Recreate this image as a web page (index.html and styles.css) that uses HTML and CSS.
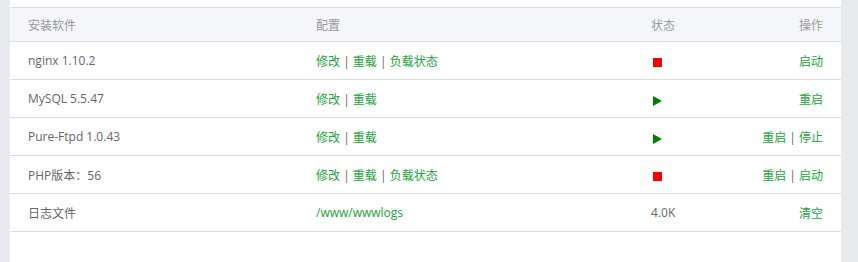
FILE: index.html
```html
<!DOCTYPE html>
<html lang="zh-CN">
<head>
<meta charset="utf-8">
<link rel="stylesheet" href="styles.css">
</head>
<body>
<div class="page">
  <div class="side"></div>
  <div class="panel">
    <table class="soft">
      <colgroup>
        <col class="c1"><col class="c2"><col class="c3"><col class="c4">
      </colgroup>
      <thead>
        <tr><th>安装软件</th><th>配置</th><th>状态</th><th class="r">操作</th></tr>
      </thead>
      <tbody>
        <tr>
          <td>nginx 1.10.2</td>
          <td><a class="lnk">修改</a> | <a class="lnk">重载</a> | <a class="lnk">负载状态</a></td>
          <td><span class="stop"></span></td>
          <td class="r"><a class="lnk">启动</a></td>
        </tr>
        <tr>
          <td>MySQL 5.5.47</td>
          <td><a class="lnk">修改</a> | <a class="lnk">重载</a></td>
          <td><span class="run"></span></td>
          <td class="r"><a class="lnk">重启</a></td>
        </tr>
        <tr>
          <td>Pure-Ftpd 1.0.43</td>
          <td><a class="lnk">修改</a> | <a class="lnk">重载</a></td>
          <td><span class="run"></span></td>
          <td class="r"><a class="lnk">重启</a> | <a class="lnk">停止</a></td>
        </tr>
        <tr>
          <td>PHP版本：56</td>
          <td><a class="lnk">修改</a> | <a class="lnk">重载</a> | <a class="lnk">负载状态</a></td>
          <td><span class="stop"></span></td>
          <td class="r"><a class="lnk">重启</a> | <a class="lnk">启动</a></td>
        </tr>
        <tr>
          <td>日志文件</td>
          <td><a class="lnk">/www/wwwlogs</a></td>
          <td>4.0K</td>
          <td class="r"><a class="lnk">清空</a></td>
        </tr>
      </tbody>
    </table>
  </div>
  <div class="side right"></div>
</div>
</body>
</html>
```
FILE: styles.css
```css
html, body {
  margin: 0;
  padding: 0;
  background: #fff;
}
body {
  font-family: "Open Sans", "Noto Sans CJK SC", sans-serif;
  font-size: 12px;
  color: #666;
}
.page {
  display: flex;
  height: 262px;
}
.side {
  width: 10px;
  background: #e9eaee;
  flex: none;
}
.side.right {
  width: 17px;
}
.panel {
  flex: 1;
  background: #fff;
  padding-top: 7px;
}
.soft {
  width: 100%;
  border-collapse: collapse;
  table-layout: fixed;
  border-top: 1px solid #ddd;
}
.c1 { width: 288px; }
.c2 { width: 335px; }
.c3 { width: 110px; }
.c4 { width: 98px; }
th {
  background: #f5f6fa;
  color: #999;
  font-weight: normal;
  text-align: left;
  height: 33px;
  padding: 0 18px;
  border-bottom: 1px solid #ddd;
}
td {
  height: 37px;
  padding: 0 18px;
  border-bottom: 1px solid #ddd;
  color: #666;
  white-space: nowrap;
}
.r { text-align: right; }
.lnk {
  color: #20a53a;
  text-decoration: none;
}
.stop {
  display: inline-block;
  width: 9px;
  height: 9px;
  background: #f00;
  vertical-align: -2px;
  margin-left: 2px;
}
.run {
  display: inline-block;
  width: 0;
  height: 0;
  border-top: 5px solid transparent;
  border-bottom: 5px solid transparent;
  border-left: 9px solid #008000;
  vertical-align: -3px;
  margin-left: 2px;
}
```
